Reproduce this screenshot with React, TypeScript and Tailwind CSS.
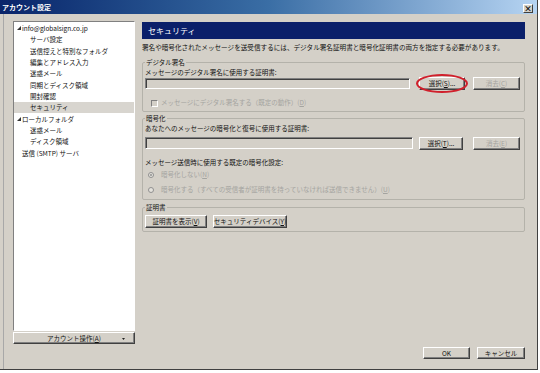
import React from 'react';

const font = "font-['Noto_Sans_CJK_JP','Noto_Sans',sans-serif]";

interface BtnProps {
  children: React.ReactNode;
  className?: string;
  disabled?: boolean;
}

function Btn({ children, className = '', disabled = false }: BtnProps) {
  return (
    <div
      className={`flex items-center justify-center whitespace-nowrap bg-[#d4d0c8] border border-t-white border-l-white border-r-[#404040] border-b-[#404040] shadow-[inset_-1px_-1px_#808080] leading-none ${
        disabled ? 'text-[#a4a4a0]' : 'text-[#111]'
      } ${className}`}
    >
      {children}
    </div>
  );
}

function Field({ className = '' }: { className?: string }) {
  return (
    <div className={`bg-[#d4d0c8] border border-t-[#808080] border-l-[#808080] border-r-white border-b-white shadow-[inset_1px_1px_#404040] ${className}`} />
  );
}

function Arrow() {
  return (
    <svg width="4" height="4" viewBox="0 0 4 4" className="mr-[1px]">
      <polygon points="4,0 4,4 0,4" fill="#333" />
    </svg>
  );
}

const tree = [
  { label: 'info@globalsign.co.jp', pad: 'pl-[3px]', arrow: true },
  { label: 'サーバ設定', pad: 'pl-[16px]' },
  { label: '送信控えと特別なフォルダ', pad: 'pl-[16px]' },
  { label: '編集とアドレス入力', pad: 'pl-[16px]' },
  { label: '迷惑メール', pad: 'pl-[16px]' },
  { label: '同期とディスク領域', pad: 'pl-[16px]' },
  { label: '開封確認', pad: 'pl-[16px]' },
  { label: 'セキュリティ', pad: 'pl-[16px]', selected: true },
  { label: 'ローカルフォルダ', pad: 'pl-[3px]', arrow: true },
  { label: '迷惑メール', pad: 'pl-[16px]' },
  { label: 'ディスク領域', pad: 'pl-[16px]' },
  { label: '送信 (SMTP) サーバ', pad: 'pl-[8px]' },
];

export default function App() {
  return (
    <div className={`w-[540px] h-[373px] bg-white ${font} text-[6.5px] text-[#111]`}>
      <div className="w-[538px] h-[370px] bg-[#d4d0c8] border-r border-b border-[#404040] flex flex-col">
        {/* title bar */}
        <div className="h-[14px] flex items-center bg-linear-to-r from-[#0a246a] via-[#3a6ea5] to-[#b6d4f2]">
          <span className="pl-[2px] text-white text-[7px] font-bold leading-[14px]">アカウント設定</span>
          <div className="ml-auto mr-[4px] mt-[3px] w-[10px] h-[9px] flex items-center justify-center bg-[#d4d0c8] border border-t-white border-l-white border-r-[#404040] border-b-[#404040] text-[8px] font-bold leading-none text-black">
            ×
          </div>
        </div>

        <div className="flex-1 flex pl-[3px]">
          <div className="flex-1 flex border-l border-[#a8a8a8] pt-[7px] pl-[9px]">
            {/* left column */}
            <div className="w-[122px] flex flex-col">
              <div className="h-[310px] bg-white border border-t-[#808080] border-l-[#808080] border-r-white border-b-white pt-[0.5px]">
                {tree.map((t, i) => (
                  <div
                    key={i}
                    className={`h-[11.35px] flex items-center leading-none ${t.pad} ${t.selected ? 'bg-[#d8d5cf]' : ''}`}
                  >
                    {t.arrow && <Arrow />}
                    <span>{t.label}</span>
                  </div>
                ))}
              </div>
              <Btn className="mt-[1px] h-[12px] relative">
                <span>
                  アカウント操作(<u>A</u>)
                </span>
                <svg width="3" height="2" viewBox="0 0 3 2" className="absolute right-[9px] top-[5px]">
                  <polygon points="0,0 3,0 1.5,2" fill="#222" />
                </svg>
              </Btn>
            </div>

            {/* right column */}
            <div className="ml-[7px] w-[383px] flex flex-col pb-[10px]">
              <div className="mt-[1px] h-[17px] bg-[#0a1f6a] text-white text-[8px] leading-[17px] pl-[6px]">セキュリティ</div>
              <div className="mt-[4px] h-[9px] leading-[9px] whitespace-nowrap text-[6.6px]">
                署名や暗号化されたメッセージを送受信するには、デジタル署名証明書と暗号化証明書の両方を指定する必要があります。
              </div>

              {/* digital signature */}
              <fieldset className="mt-[7px] border border-[#b4b2aa] rounded-[2px] pl-[2px] pr-[4px] pb-[2px]">
                <legend className="px-[1px] leading-[7px]">デジタル署名</legend>
                <div className="mt-[2px] h-[8px] leading-[8px]">メッセージのデジタル署名に使用する証明書:</div>
                <div className="mt-[1px] h-[13px] flex items-center">
                  <Field className="w-[265px] h-[11px]" />
                  <div className="relative ml-[9px]">
                    <Btn className="w-[46px] h-[13px]">
                      選択(<u>S</u>)...
                    </Btn>
                    <div className="absolute -left-[3px] -top-[3px] w-[52px] h-[19px] rounded-[50%] border-2 border-[#d0202c]" />
                  </div>
                  <Btn disabled className="ml-[8px] w-[47px] h-[13px]">
                    消去(<u>C</u>)
                  </Btn>
                </div>
                <div className="mt-[7px] h-[12px] flex items-center pl-[6px] text-[#a4a4a0]">
                  <div className="w-[7px] h-[7px] bg-[#d4d0c8] border border-t-[#808080] border-l-[#808080] border-r-white border-b-white" />
                  <span className="ml-[3px]">
                    メッセージにデジタル署名する（既定の動作）(<u>D</u>)
                  </span>
                </div>
              </fieldset>

              {/* encryption */}
              <fieldset className="mt-[3px] border border-[#b4b2aa] rounded-[2px] pl-[2px] pr-[4px] pb-[4px]">
                <legend className="px-[1px] leading-[7px]">暗号化</legend>
                <div className="mt-[2px] h-[8px] leading-[8px]">あなたへのメッセージの暗号化と復号に使用する証明書:</div>
                <div className="mt-[4px] h-[14px] flex items-center">
                  <Field className="w-[268px] h-[12px]" />
                  <Btn className="ml-[6px] w-[44px] h-[13px]">
                    選択(<u>T</u>)...
                  </Btn>
                  <Btn disabled className="ml-[10px] w-[47px] h-[13px]">
                    消去(<u>E</u>)
                  </Btn>
                </div>
                <div className="mt-[8px] h-[8px] leading-[8px]">メッセージ送信時に使用する既定の暗号化設定:</div>
                <div className="mt-[4px] h-[10px] flex items-center pl-[3px] text-[#a4a4a0]">
                  <div className="w-[6px] h-[6px] rounded-full bg-[#e4e2dc] border border-[#909090] flex items-center justify-center">
                    <div className="w-[2px] h-[2px] rounded-full bg-[#909090]" />
                  </div>
                  <span className="ml-[7px]">
                    暗号化しない(<u>N</u>)
                  </span>
                </div>
                <div className="mt-[5px] h-[10px] flex items-center pl-[3px] text-[#a4a4a0]">
                  <div className="w-[6px] h-[6px] rounded-full bg-[#e4e2dc] border border-[#909090]" />
                  <span className="ml-[7px]">
                    暗号化する（すべての受信者が証明書を持っていなければ送信できません）(<u>U</u>)
                  </span>
                </div>
              </fieldset>

              {/* certificates */}
              <fieldset className="mt-[4px] border border-[#b4b2aa] rounded-[2px] pl-[2px] pr-[4px] pb-[3px]">
                <legend className="px-[1px] leading-[7px]">証明書</legend>
                <div className="mt-[4px] h-[13px] flex items-center">
                  <Btn className="w-[62px] h-[13px]">
                    証明書を表示(<u>V</u>)
                  </Btn>
                  <Btn className="ml-[6px] w-[74px] h-[13px]">
                    セキュリティデバイス(<u>Y</u>)
                  </Btn>
                </div>
              </fieldset>

              <div className="flex-1" />
              <div className="flex justify-end h-[12px]">
                <Btn className="w-[47px] h-[12px]">OK</Btn>
                <Btn className="ml-[7px] w-[48px] h-[12px]">キャンセル</Btn>
              </div>
            </div>
          </div>
        </div>
      </div>
    </div>
  );
}
